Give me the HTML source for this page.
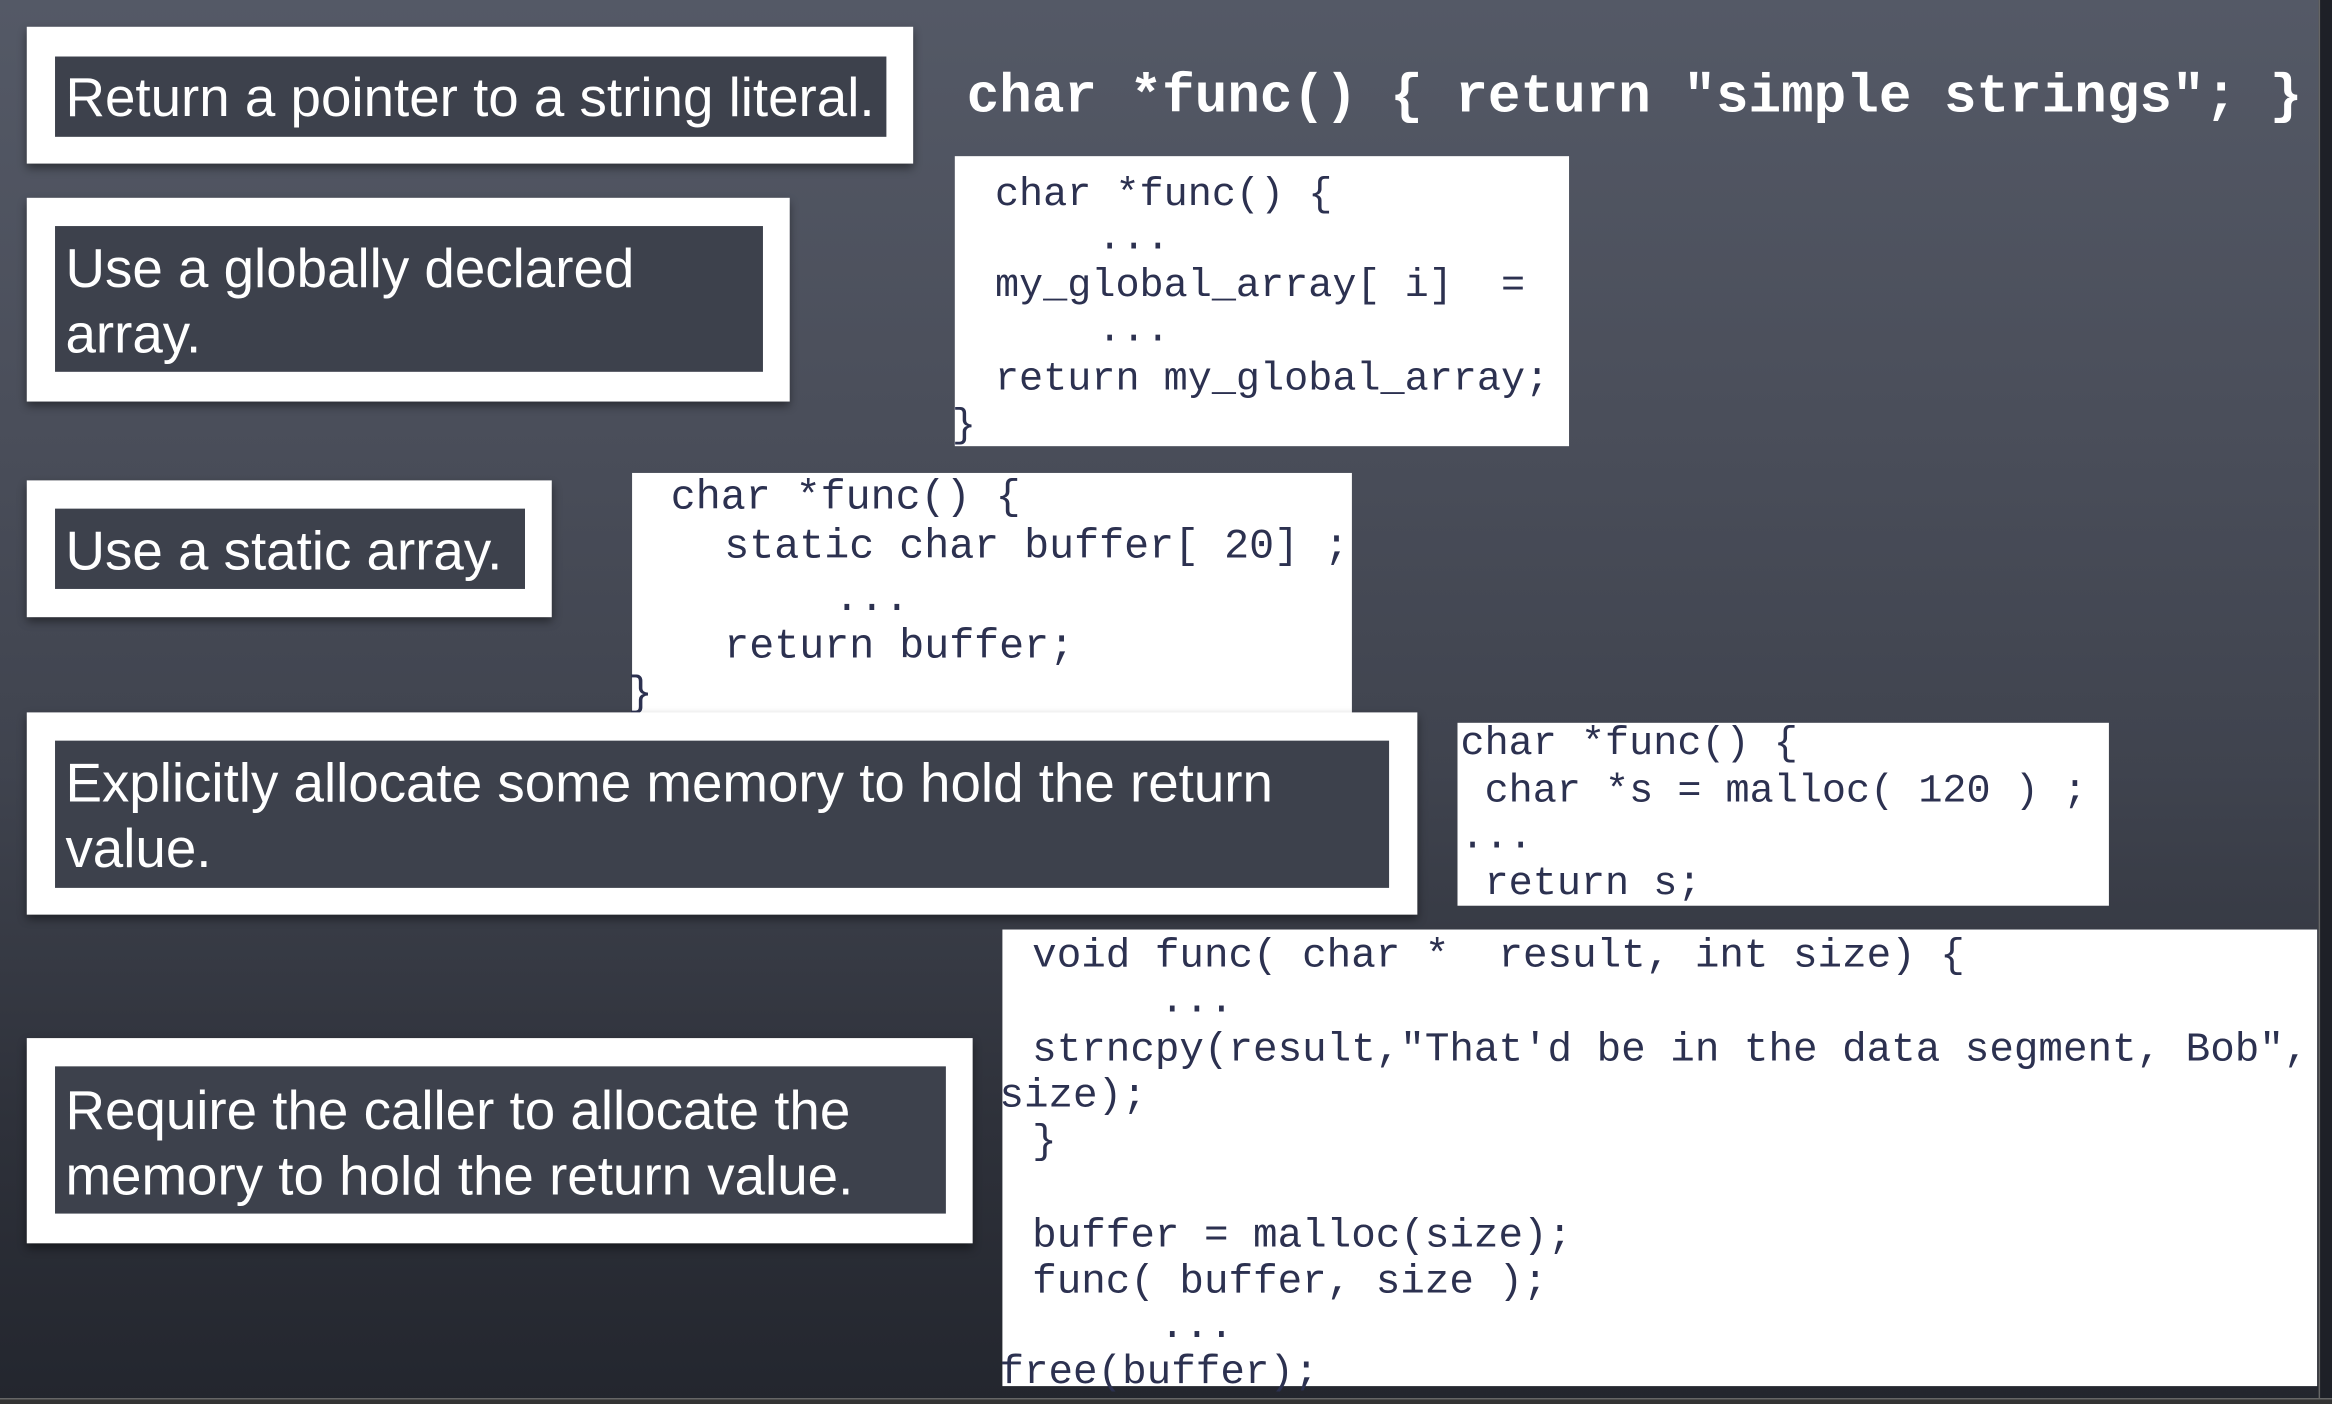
<!DOCTYPE html>
<html><head><meta charset="utf-8">
<style>
html,body{margin:0;padding:0;width:2332px;height:1404px;overflow:hidden;background:#333;}
#s{position:absolute;left:0;top:0;width:1568px;height:944px;transform:scale(1.48724);transform-origin:0 0;
background:linear-gradient(180deg,#545966 0%,#4a4e5a 30%,#3f434e 55%,#2e313a 80%,#23262e 100%);overflow:hidden;}
#rs{position:absolute;left:1559px;top:0;width:9px;height:944px;background:#1e2027;border-left:1px solid #666;}
#bs{position:absolute;left:0;top:940px;width:1568px;height:4px;background:#333;border-top:1px solid #666;}
.w{position:absolute;background:#fff;box-shadow:0 3px 6px rgba(0,0,0,.45);}
.d{position:absolute;background:#3d414c;color:#fff;font-family:"Liberation Sans",Arial,sans-serif;font-size:36.8px;line-height:44px;box-sizing:border-box;padding-left:7px;white-space:nowrap;}
.c{position:absolute;background:#fff;}
.l{position:absolute;font-family:"Liberation Mono","Courier New",monospace;color:#2c3150;font-size:27px;line-height:30px;white-space:pre;}
#top{position:absolute;left:650px;top:43px;font-family:"Liberation Mono",monospace;font-weight:bold;color:#fff;font-size:36.5px;line-height:46px;white-space:pre;}
</style></head><body>
<div id="s">
<div id="top">char *func() { return "simple strings"; }</div>

<div class="w" style="left:18px;top:18px;width:596px;height:92px"></div>
<div class="d" style="left:37px;top:38px;width:559px;height:54px;padding-top:6px">Return a pointer to a string literal.</div>

<div class="w" style="left:18px;top:133px;width:513px;height:137px"></div>
<div class="d" style="left:37px;top:152px;width:476px;height:98px;padding-top:7px">Use a globally declared<br>array.</div>

<div class="w" style="left:18px;top:323px;width:353px;height:92px"></div>
<div class="d" style="left:37px;top:342px;width:316px;height:54px;padding-top:7px">Use a static array.</div>

<div class="c" style="left:642px;top:105px;width:413px;height:195px"></div>
<div class="l" style="left:669px;top:117px">char *func() {</div>
<div class="l" style="left:738px;top:146px">...</div>
<div class="l" style="left:669px;top:178px">my_global_array[ i]  =</div>
<div class="l" style="left:738px;top:208px">...</div>
<div class="l" style="left:669px;top:241px">return my_global_array;</div>
<div class="l" style="left:640px;top:272px">}</div>

<div class="c" style="left:425px;top:318px;width:484px;height:165px"></div>
<div class="l" style="left:451px;top:321px;font-size:28px">char *func() {</div>
<div class="l" style="left:487px;top:354px;font-size:28px">static char buffer[ 20] ;</div>
<div class="l" style="left:561px;top:389px;font-size:28px">...</div>
<div class="l" style="left:487px;top:421px;font-size:28px">return buffer;</div>
<div class="l" style="left:422px;top:453px;font-size:28px">}</div>

<div class="w" style="left:18px;top:479px;width:935px;height:136px"></div>
<div class="d" style="left:37px;top:498px;width:897px;height:99px;padding-top:7px">Explicitly allocate some memory to hold the return<br>value.</div>

<div class="c" style="left:980px;top:486px;width:438px;height:123px"></div>
<div class="l" style="left:982px;top:486px">char *func() {</div>
<div class="l" style="left:982px;top:518px"> char *s = malloc( 120 ) ;</div>
<div class="l" style="left:982px;top:549px">...</div>
<div class="l" style="left:982px;top:580px"> return s;</div>

<div class="w" style="left:18px;top:698px;width:636px;height:138px"></div>
<div class="d" style="left:37px;top:717px;width:599px;height:99px;padding-top:8px">Require the caller to allocate the<br>memory to hold the return value.</div>

<div class="c" style="left:674px;top:625px;width:884px;height:307px"></div>
<div class="l" style="left:694px;top:629px;font-size:27.5px">void func( char *  result, int size) {</div>
<div class="l" style="left:780px;top:659px;font-size:27.5px">...</div>
<div class="l" style="left:694px;top:692px;font-size:27.5px">strncpy(result,"That'd be in the data segment, Bob",</div>
<div class="l" style="left:672px;top:723px;font-size:27.5px">size);</div>
<div class="l" style="left:694px;top:754px;font-size:27.5px">}</div>
<div class="l" style="left:694px;top:817px;font-size:27.5px">buffer = malloc(size);</div>
<div class="l" style="left:694px;top:848px;font-size:27.5px">func( buffer, size );</div>
<div class="l" style="left:780px;top:878px;font-size:27.5px">...</div>
<div class="l" style="left:672px;top:909px;font-size:27.5px">free(buffer);</div>

<div id="rs"></div>
<div id="bs"></div>
</div>
</body></html>
